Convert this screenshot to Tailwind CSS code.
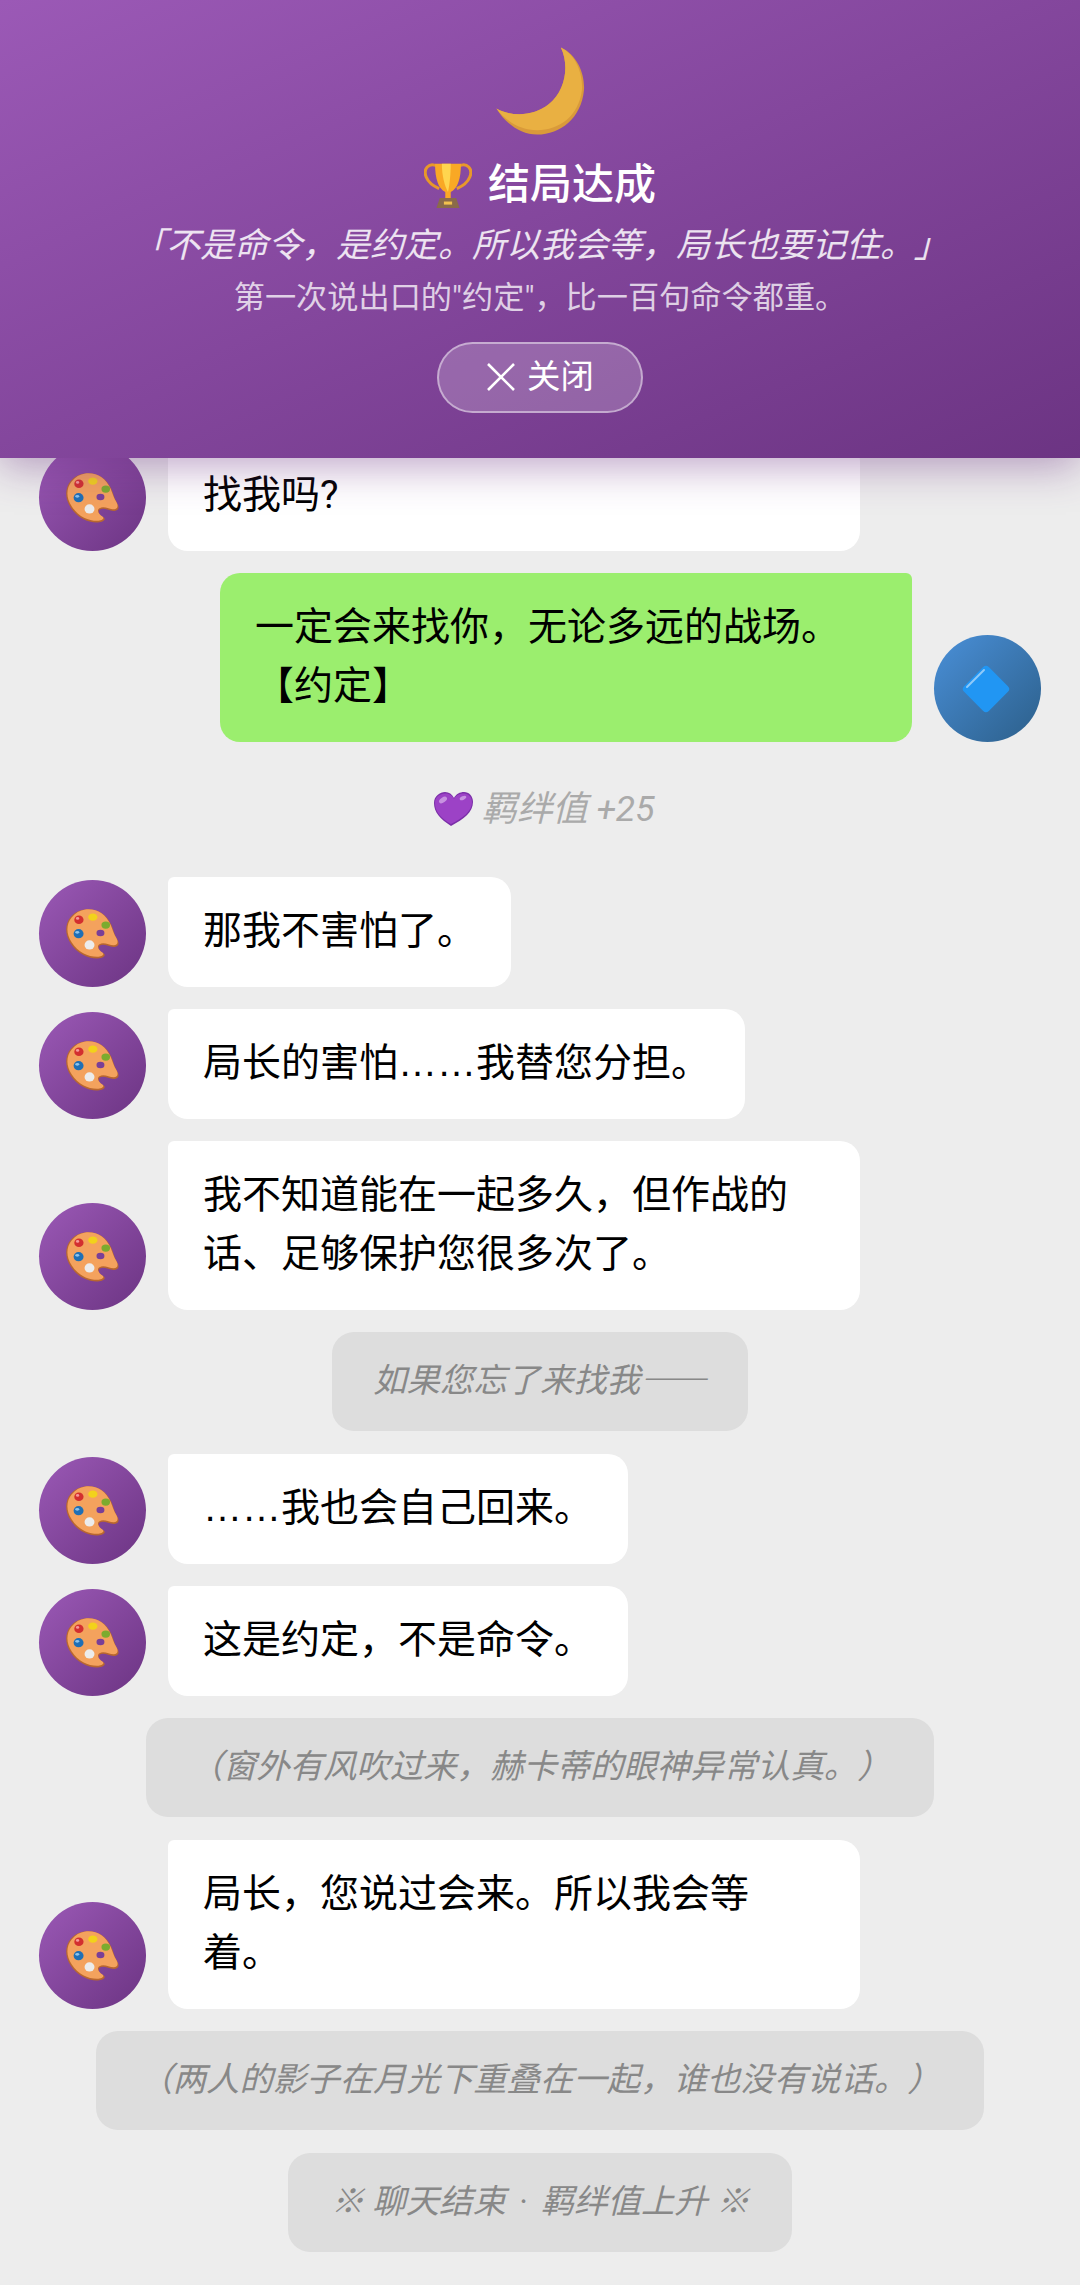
<!DOCTYPE html>
<html lang="zh-CN">
  <head>
    <meta charset="UTF-8" />
    <title>结局达成</title>
    <script src="https://cdn.jsdelivr.net/npm/@tailwindcss/browser@4"></script>
  </head>
  <body class="font-['Roboto','Noto_Sans_CJK_SC',sans-serif] bg-[#ededed] [text-spacing-trim:space-all]">
    <svg class="hidden">
      <defs>
        <symbol id="palette" viewBox="0 0 160 150">
          <path d="M58 1C92 -3 122 14 137 48C143 62 146 78 154 90C162 102 160 113 146 114C130 115 114 102 102 110C92 117 104 128 114 134C122 140 112 149 96 149C66 150 34 134 14 104C-4 76 -4 46 14 24C26 10 40 3 58 1Z" fill="#b9672f" />
          <path d="M58 1C92 -3 120 14 135 48C141 62 144 76 152 87C159 98 156 109 144 109C130 109 114 98 101 106C90 113 102 126 110 131C118 137 108 144 94 144C66 144 36 130 17 100C0 74 0 46 17 25C28 11 42 4 58 1Z" fill="#f4a25d" />
          <ellipse cx="104" cy="72" rx="12" ry="10" fill="#7a3f97" />
          <ellipse cx="39" cy="32" rx="14" ry="13" fill="#d32f2f" />
          <ellipse cx="35" cy="28" rx="5" ry="4" fill="#f59a9a" />
          <ellipse cx="81" cy="24" rx="14" ry="11" fill="#f2d21b" />
          <ellipse cx="120" cy="48" rx="13" ry="11" fill="#7cab2e" />
          <ellipse cx="38" cy="74" rx="15" ry="14" fill="#1f6fb5" />
          <ellipse cx="34" cy="70" rx="6" ry="4" fill="#8cc4ee" />
          <ellipse cx="71" cy="108" rx="15" ry="14" fill="#ececec" />
        </symbol>
      </defs>
    </svg>

    <div class="relative h-[2285px] overflow-hidden">
      <!-- result banner lies over the chat -->
      <div class="absolute top-0 left-0 z-10 flex h-[458px] w-full flex-col items-center bg-linear-to-br from-[#9b59b6] to-[#6c3483] pt-[43px] shadow-[0_8px_40px_rgba(108,52,131,0.45)]">
        <svg class="h-[95px] w-[95px]" viewBox="280 70 280 270">
          <path d="M480 78C530 100 552 160 548 205C540 285 480 335 410 335C360 335 315 300 290 258C340 285 400 280 445 245C495 205 505 130 480 78Z" fill="#d99a3a" />
          <path d="M480 78C526 100 546 160 542 205C532 280 476 322 410 322C362 322 318 296 290 258C340 285 400 280 445 245C495 205 505 130 480 78Z" fill="#e9b042" />
        </svg>
        <div class="mt-[19px] flex h-[56px] items-center">
          <svg class="mr-[16px] h-[46px] w-[48px]" viewBox="0 0 140 135">
            <path d="M38 12C14 0 -4 20 6 44C14 64 30 72 44 78M102 12C126 0 144 20 134 44C126 64 110 72 96 78" fill="none" stroke="#e8982a" stroke-width="9" />
            <path d="M32 5H108C108 50 98 78 78 88V106H62V88C42 78 32 50 32 5Z" fill="#f9a825" />
            <path d="M52 5H78C78 40 74 70 70 88C60 70 52 40 52 5Z" fill="#ffd54f" />
            <path d="M46 106H94L104 135H36Z" fill="#8a6a4a" />
            <rect x="58" y="116" width="24" height="9" fill="#f2c14e" />
          </svg>
          <span class="text-[42px] leading-[56px] font-medium text-white">结局达成</span>
        </div>
        <p class="mt-[8px] text-[34px] leading-[48px] text-white/85 italic">「不是命令，是约定。所以我会等，局长也要记住。」</p>
        <p class="mt-[6px] text-[31.2px] leading-[46px] text-white/75">第一次说出口的"约定"，比一百句命令都重。</p>
        <div class="mt-[20.5px] flex h-[71px] w-[206px] items-center justify-center gap-[11px] rounded-[36px] border-2 border-white/45 bg-white/20 text-[33.4px] text-white">
          <svg class="h-[30px] w-[30px]" viewBox="0 0 30 30"><path d="M2 2L28 28M28 2L2 28" stroke="#ffffff" stroke-width="2.6" fill="none" /></svg>
          <span>关闭</span>
        </div>
      </div>

      <div class="flex flex-col gap-[22px] px-[39px] pt-[441px]">
        <div class="flex items-end gap-[22px]">
          <div class="flex h-[107px] w-[107px] shrink-0 items-center justify-center rounded-full bg-linear-to-br from-[#9b59b6] to-[#6c3483]"><svg class="h-[50px] w-[53px]"><use href="#palette" /></svg></div>
          <div class="w-[692px] rounded-[6px_20px_20px_20px] bg-white px-[35px] pt-[24.5px] pb-[26.5px] text-[39px] leading-[59px] text-black">找我吗?</div>
        </div>

        <div class="flex items-end justify-end gap-[22px]">
          <div class="w-[692px] rounded-[20px_6px_20px_20px] bg-[#9bee6e] px-[35px] pt-[24.5px] pb-[26.5px] text-[39px] leading-[59px] text-black">一定会来找你，无论多远的战场。【约定】</div>
          <div class="flex h-[107px] w-[107px] shrink-0 items-center justify-center rounded-full bg-linear-to-br from-[#4a90d9] to-[#2c5f8a]">
            <svg class="mr-[4px] h-[52px] w-[52px]" viewBox="0 0 52 52">
              <rect x="8.5" y="8.5" width="35" height="35" rx="4" transform="rotate(45 26 26)" fill="#2196f3" />
              <path d="M7 24L24 7" stroke="#90caf9" stroke-width="2" stroke-linecap="round" fill="none" />
            </svg>
          </div>
        </div>

        <div class="flex h-[91px] items-center justify-center text-[35.4px] text-[#aaaaaa] italic">
          <svg class="mr-[9px] ml-[8px] h-[35px] w-[39px]" viewBox="0 0 39 35">
            <path d="M17 34C6 27 0 20 0 11C0 4 6 0 11 0C15 0 18 2 20 6C22 2 26 0 30 0C35 0 39 4 39 10C39 20 30 27 17 34Z" fill="#7b2fa8" />
            <path d="M17 32C6 26 1 19 1 11C1 5 6 1.5 11 1.5C15 1.5 18 3 20 7C22 3 26 1.5 30 1.5C34 1.5 38 5 38 10C38 19 29 26 17 32Z" fill="#9c42c6" />
            <ellipse cx="9" cy="8" rx="4.5" ry="2.5" transform="rotate(-35 9 8)" fill="#c792e0" />
            <ellipse cx="29" cy="6" rx="3.5" ry="1.8" transform="rotate(-25 29 6)" fill="#c792e0" />
          </svg>
          <span>羁绊值 +25</span>
        </div>

        <div class="flex items-end gap-[22px]">
          <div class="flex h-[107px] w-[107px] shrink-0 items-center justify-center rounded-full bg-linear-to-br from-[#9b59b6] to-[#6c3483]"><svg class="h-[50px] w-[53px]"><use href="#palette" /></svg></div>
          <div class="max-w-[692px] rounded-[6px_20px_20px_20px] bg-white px-[35px] pt-[24.5px] pb-[26.5px] text-[39px] leading-[59px] text-black">那我不害怕了。</div>
        </div>
        <div class="flex items-end gap-[22px]">
          <div class="flex h-[107px] w-[107px] shrink-0 items-center justify-center rounded-full bg-linear-to-br from-[#9b59b6] to-[#6c3483]"><svg class="h-[50px] w-[53px]"><use href="#palette" /></svg></div>
          <div class="max-w-[692px] rounded-[6px_20px_20px_20px] bg-white px-[35px] pt-[24.5px] pb-[26.5px] text-[39px] leading-[59px] text-black">局长的害怕<span class="font-['Liberation_Sans'] leading-[0]">……</span>我替您分担。</div>
        </div>
        <div class="flex items-end gap-[22px]">
          <div class="flex h-[107px] w-[107px] shrink-0 items-center justify-center rounded-full bg-linear-to-br from-[#9b59b6] to-[#6c3483]"><svg class="h-[50px] w-[53px]"><use href="#palette" /></svg></div>
          <div class="max-w-[692px] rounded-[6px_20px_20px_20px] bg-white px-[35px] pt-[24.5px] pb-[26.5px] text-[39px] leading-[59px] text-black">我不知道能在一起多久，但作战的话、足够保护您很多次了。</div>
        </div>

        <div class="mb-[1.3px] flex justify-center">
          <div class="rounded-[22px] bg-[#dddddd] px-[41px] py-[25px] text-[33.4px] leading-[48.7px] text-[#888888] italic">如果您忘了来找我<span class="font-['Noto_Sans_CJK_SC'] leading-[0]">——</span></div>
        </div>

        <div class="flex items-end gap-[22px]">
          <div class="flex h-[107px] w-[107px] shrink-0 items-center justify-center rounded-full bg-linear-to-br from-[#9b59b6] to-[#6c3483]"><svg class="h-[50px] w-[53px]"><use href="#palette" /></svg></div>
          <div class="max-w-[692px] rounded-[6px_20px_20px_20px] bg-white px-[35px] pt-[24.5px] pb-[26.5px] text-[39px] leading-[59px] text-black"><span class="font-['Liberation_Sans'] leading-[0]">……</span>我也会自己回来。</div>
        </div>
        <div class="flex items-end gap-[22px]">
          <div class="flex h-[107px] w-[107px] shrink-0 items-center justify-center rounded-full bg-linear-to-br from-[#9b59b6] to-[#6c3483]"><svg class="h-[50px] w-[53px]"><use href="#palette" /></svg></div>
          <div class="max-w-[692px] rounded-[6px_20px_20px_20px] bg-white px-[35px] pt-[24.5px] pb-[26.5px] text-[39px] leading-[59px] text-black">这是约定，不是命令。</div>
        </div>

        <div class="mb-[1.3px] flex justify-center">
          <div class="rounded-[22px] bg-[#dddddd] px-[43px] py-[25px] text-[33.4px] leading-[48.7px] text-[#888888] italic">（窗外有风吹过来，赫卡蒂的眼神异常认真。）</div>
        </div>

        <div class="flex items-end gap-[22px]">
          <div class="flex h-[107px] w-[107px] shrink-0 items-center justify-center rounded-full bg-linear-to-br from-[#9b59b6] to-[#6c3483]"><svg class="h-[50px] w-[53px]"><use href="#palette" /></svg></div>
          <div class="max-w-[692px] rounded-[6px_20px_20px_20px] bg-white px-[35px] pt-[24.5px] pb-[26.5px] text-[39px] leading-[59px] text-black">局长，您说过会来。所以我会等着。</div>
        </div>

        <div class="mb-[1.3px] flex justify-center">
          <div class="rounded-[22px] bg-[#dddddd] px-[43px] py-[25px] text-[33.4px] leading-[48.7px] text-[#888888] italic">（两人的影子在月光下重叠在一起，谁也没有说话。）</div>
        </div>
        <div class="flex justify-center">
          <div class="rounded-[22px] bg-[#dddddd] px-[43px] py-[25px] text-[33.4px] leading-[48.7px] text-[#888888] italic">※ 聊天结束 <span class="mx-[5px]">·</span> 羁绊值上升 ※</div>
        </div>
      </div>
    </div>
  </body>
</html>
